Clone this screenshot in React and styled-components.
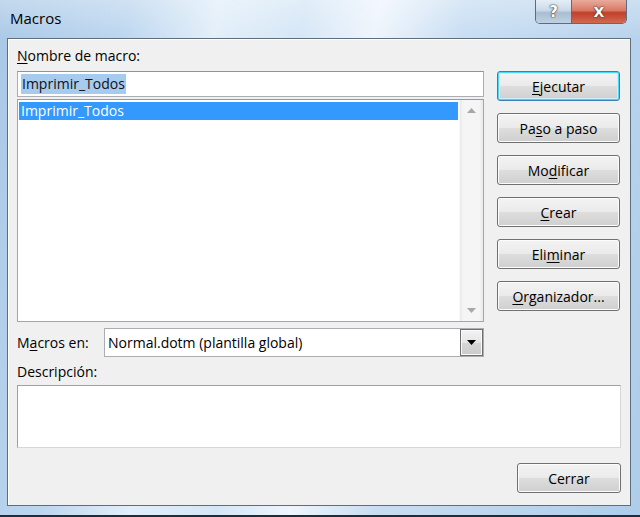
import React from "react";
import styled, { createGlobalStyle } from "styled-components";

const Global = createGlobalStyle`
  html, body { margin: 0; padding: 0; background: #6f8fb0; }
  body { width: 640px; height: 517px; overflow: hidden; font-family: "Open Sans", "Noto Sans", sans-serif; }
`;

const Frame = styled.div`
  width: 640px;
  height: 517px;
  box-sizing: border-box;
  display: flex;
  flex-direction: column;
  background:
    linear-gradient(180deg, rgba(255,255,255,0.3) 0px, rgba(255,255,255,0) 40px),
    linear-gradient(100deg, #a9c8e6 0%, #bcd6ef 18%, #e2eef9 30%, #d4e6f6 42%, #eef5fc 52%, #c7ddf2 64%, #bdd6ee 80%, #aecde9 100%);
  border-bottom: 2px solid #1f2d3a;
  padding: 0 9px 9px 7px;
`;

const TitleBar = styled.div`
  height: 38px;
  display: flex;
  align-items: flex-start;
  justify-content: space-between;
  flex-shrink: 0;
`;

const Title = styled.div`
  font-family: "Open Sans", "Noto Sans", sans-serif;
  font-size: 15px;
  color: #000;
  padding: 8px 0 0 3px;
`;

const Caption = styled.div`
  display: flex;
  margin-right: 4px;
  border: 1px solid #5a6c80;
  border-top: none;
  border-radius: 0 0 5px 5px;
  overflow: hidden;
  height: 23px;
`;

const CapButton = styled.div`
  width: ${(p) => p.$w}px;
  height: 23px;
  display: flex;
  align-items: center;
  justify-content: center;
  font-family: "DejaVu Sans", sans-serif;
  font-weight: bold;
  font-size: ${(p) => p.$fs}px;
  color: #fff;
  text-shadow: 0 0 2px #333, 0 0 1px #222;
  background: ${(p) =>
    p.$close
      ? "linear-gradient(180deg, #e9ab9c 0%, #d97a66 45%, #c2402b 55%, #d06a50 100%)"
      : "linear-gradient(180deg, #e5eef7 0%, #cbd9e7 45%, #a9bed3 55%, #bfd1e2 100%)"};
  & + & { border-left: 1px solid #5a6c80; }
`;

const Client = styled.div`
  flex: 1;
  background: #f0f0f0;
  border: 1px solid #5f6e7d;
  box-shadow: inset 1px 1px 0 #ffffff;
  display: flex;
  flex-direction: column;
  padding: 7px 9px 0 9px;
  font-size: 14px;
  color: #000;
`;

const Label = styled.div`
  height: 20px;
  line-height: 20px;
  white-space: nowrap;
`;

const U = styled.span`
  text-decoration: underline;
  text-underline-offset: 2px;
`;

const Main = styled.div`
  display: flex;
  gap: 13px;
  margin-top: 5px;
`;

const LeftCol = styled.div`
  width: 467px;
  display: flex;
  flex-direction: column;
`;

const RightCol = styled.div`
  width: 123px;
  display: flex;
  flex-direction: column;
  gap: 12px;
`;

const TextBox = styled.div`
  height: 26px;
  box-sizing: border-box;
  background: #fff;
  border: 1px solid #abadb3;
  border-top-color: #8f939b;
  display: flex;
  align-items: center;
  padding-left: 3px;
`;

const Selection = styled.span`
  background: #a6cbef;
  color: #111;
  line-height: 20px;
  padding: 0 1px;
`;

const ListBox = styled.div`
  margin-top: 2px;
  height: 223px;
  box-sizing: border-box;
  background: #fff;
  border: 1px solid #a5a5a5;
  border-top-color: #9a9a9a;
  display: flex;
`;

const ListItems = styled.div`
  flex: 1;
  padding: 2px 1px 0 1px;
`;

const ListItem = styled.div`
  height: 18px;
  line-height: 18px;
  padding-left: 2px;
  background: ${(p) => (p.$sel ? "#3399ff" : "transparent")};
  color: ${(p) => (p.$sel ? "#fff" : "#000")};
`;

const ScrollBar = styled.div`
  width: 23px;
  background: linear-gradient(90deg, #e9e9e9 0px, #f5f5f5 3px, #f5f5f5 19px, #e9e9e9 23px);
  border-left: 1px solid #f8f8f8;
  display: flex;
  flex-direction: column;
  justify-content: space-between;
  align-items: center;
  padding: 8px 0 8px 0;
`;

const Arrow = styled.svg`
  width: 9px;
  height: 5px;
  display: block;
`;

const Button = styled.div`
  height: 30px;
  box-sizing: border-box;
  border: 1px solid ${(p) => (p.$default ? "#3c7fb1" : "#707070")};
  border-radius: 3px;
  box-shadow: ${(p) =>
    p.$default ? "inset 0 0 0 1px #48d6fb, inset 0 0 0 2px #c9eefc" : "inset 0 0 0 1px #fcfcfc"};
  background: linear-gradient(180deg, #f3f3f3 0%, #ebebeb 48%, #dddddd 52%, #cfcfcf 100%);
  display: flex;
  align-items: center;
  justify-content: center;
  white-space: nowrap;
  color: #000;
  width: ${(p) => (p.$w ? p.$w + "px" : "auto")};
`;

const MacrosRow = styled.div`
  width: 467px;
  display: flex;
  align-items: center;
  margin-top: 6px;
`;

const MacrosLabel = styled.div`
  width: 87px;
  white-space: nowrap;
`;

const Select = styled.div`
  flex: 1;
  height: 29px;
  box-sizing: border-box;
  background: #fff;
  border: 1px solid #abadb3;
  display: flex;
  align-items: center;
  padding: 0 0 0 3px;
`;

const SelectText = styled.div`
  flex: 1;
`;

const DropButton = styled.div`
  width: 23px;
  height: 27px;
  box-sizing: border-box;
  border: 1px solid #6f6f6f;
  box-shadow: inset 0 0 0 1px #fafafa;
  background: linear-gradient(180deg, #f2f2f2 0%, #e6e6e6 50%, #d6d6d6 51%, #cbcbcb 100%);
  display: flex;
  align-items: center;
  justify-content: center;
`;

const DescLabel = styled(Label)`
  margin-top: 5px;
`;

const DescBox = styled.div`
  margin-top: 3px;
  height: 63px;
  box-sizing: border-box;
  background: #fff;
  border: 1px solid #a0a0a0;
  border-right-color: #d6d6d6;
  border-bottom-color: #d6d6d6;
`;

const Footer = styled.div`
  display: flex;
  justify-content: flex-end;
  margin-top: 15px;
`;

const buttons = [
  { pre: "", u: "E", post: "jecutar", def: true },
  { pre: "Pa", u: "s", post: "o a paso" },
  { pre: "Mo", u: "d", post: "ificar" },
  { pre: "", u: "C", post: "rear" },
  { pre: "Eli", u: "m", post: "inar" },
  { pre: "", u: "O", post: "rganizador..." },
];

export default function App() {
  return (
    <>
      <Global />
      <Frame>
        <TitleBar>
          <Title>Macros</Title>
          <Caption>
            <CapButton $w={35} $fs={15}>?</CapButton>
            <CapButton $w={54} $fs={14} $close>X</CapButton>
          </Caption>
        </TitleBar>
        <Client>
          <Label>
            <U>N</U>ombre de macro:
          </Label>
          <Main>
            <LeftCol>
              <TextBox>
                <Selection>Imprimir_Todos</Selection>
              </TextBox>
              <ListBox>
                <ListItems>
                  <ListItem $sel>Imprimir_Todos</ListItem>
                </ListItems>
                <ScrollBar>
                  <Arrow viewBox="0 0 9 5">
                    <path d="M0 5 L4.5 0 L9 5 Z" fill="#a8a8a8" />
                  </Arrow>
                  <Arrow viewBox="0 0 9 5">
                    <path d="M0 0 L4.5 5 L9 0 Z" fill="#a8a8a8" />
                  </Arrow>
                </ScrollBar>
              </ListBox>
            </LeftCol>
            <RightCol>
              {buttons.map((b, i) => (
                <Button key={i} $default={b.def}>
                  {b.pre}
                  <U>{b.u}</U>
                  {b.post}
                </Button>
              ))}
            </RightCol>
          </Main>
          <MacrosRow>
            <MacrosLabel>
              M<U>a</U>cros en:
            </MacrosLabel>
            <Select>
              <SelectText>Normal.dotm (plantilla global)</SelectText>
              <DropButton>
                <svg width="9" height="5" viewBox="0 0 9 5">
                  <path d="M0 0 L9 0 L4.5 5 Z" fill="#000" />
                </svg>
              </DropButton>
            </Select>
          </MacrosRow>
          <DescLabel>Descripción:</DescLabel>
          <DescBox />
          <Footer>
            <Button $w={104}>Cerrar</Button>
          </Footer>
        </Client>
      </Frame>
    </>
  );
}
